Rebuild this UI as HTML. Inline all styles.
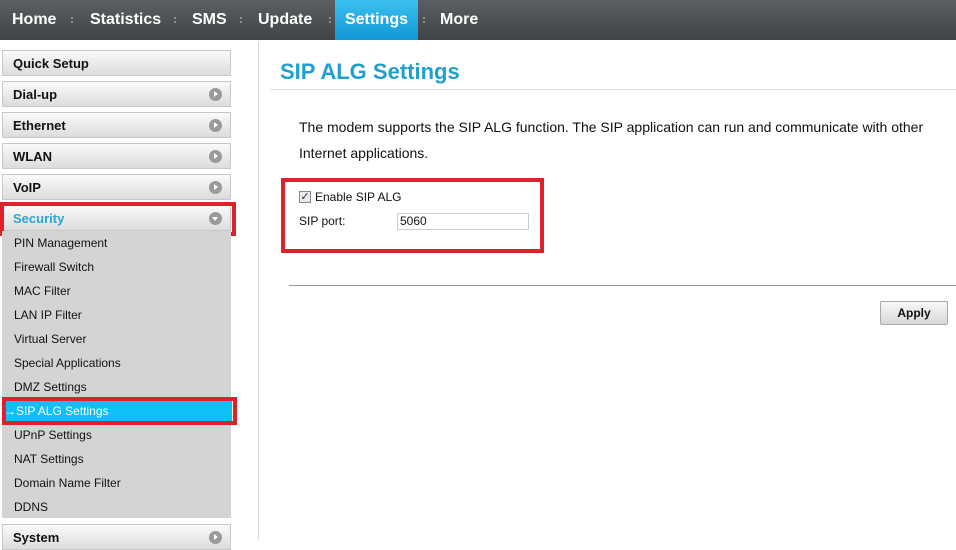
<!DOCTYPE html>
<html><head><style>
*{margin:0;padding:0;box-sizing:border-box}
body{width:956px;height:550px;overflow:hidden;background:#fff;font-family:"Liberation Sans",Arial,sans-serif;position:relative}
.nav{position:absolute;left:0;top:0;width:956px;height:40px;background:linear-gradient(#5a6062,#3f4547)}
.nav span{position:absolute;top:0;height:40px;line-height:40px;color:#fff;font-weight:bold;font-size:16px}
.nav i{position:absolute;top:17px;width:2px;height:6px;border-top:2px dotted #8a9092;border-bottom:2px dotted #8a9092}
.sel{background:linear-gradient(#3cc0ee,#1199d6);}
.m{position:absolute;left:2px;width:229px;height:26px;border:1px solid #c8c8c8;background:linear-gradient(#fafafa,#dcdcdc);font-weight:bold;font-size:13px;line-height:25px;padding-left:10px;color:#111}
.m b{position:absolute;right:8px;top:6px;width:13px;height:13px;border-radius:50%;background:#9a9a9a}
.m b:after{content:"";position:absolute;left:5px;top:3px;border-left:4px solid #fff;border-top:3.5px solid transparent;border-bottom:3.5px solid transparent}
.m b.d:after{left:3px;top:5px;border-top:4px solid #fff;border-left:3.5px solid transparent;border-right:3.5px solid transparent;border-bottom:0}
.sub{position:absolute;left:2px;top:231px;width:229px;height:287px;background:#d4d4d4}
.s{position:absolute;left:14px;font-size:12px;color:#111}
.red{position:absolute;border:4px solid #e0202a}
</style></head><body>
<div class="nav">
<span style="left:12px">Home</span><i style="left:71px"></i>
<span style="left:90px">Statistics</span><i style="left:174px"></i>
<span style="left:192px">SMS</span><i style="left:240px"></i>
<span style="left:258px">Update</span><i style="left:329px"></i>
<span class="sel" style="left:335px;width:83px;text-align:center">Settings</span><i style="left:423px"></i>
<span style="left:440px">More</span>
</div>
<div class="m" style="top:50px">Quick Setup</div>
<div class="m" style="top:81px">Dial-up<b></b></div>
<div class="m" style="top:112px">Ethernet<b></b></div>
<div class="m" style="top:143px">WLAN<b></b></div>
<div class="m" style="top:174px">VoIP<b></b></div>
<div class="m" style="top:205px;color:#2aa6d3">Security<b class="d"></b></div>
<div class="red" style="left:0;top:202px;width:236px;height:34px"></div>
<div class="sub"></div>
<div class="s" style="top:236px">PIN Management</div>
<div class="s" style="top:260px">Firewall Switch</div>
<div class="s" style="top:284px">MAC Filter</div>
<div class="s" style="top:308px">LAN IP Filter</div>
<div class="s" style="top:332px">Virtual Server</div>
<div class="s" style="top:356px">Special Applications</div>
<div class="s" style="top:380px">DMZ Settings</div>
<div style="position:absolute;left:4px;top:401px;width:228px;height:20px;background:#0fc0f8"></div>
<div class="s" style="top:404px;left:4px;color:#fff">→SIP ALG Settings</div>
<div class="red" style="left:2px;top:397px;width:235px;height:28px"></div>
<div class="s" style="top:428px">UPnP Settings</div>
<div class="s" style="top:452px">NAT Settings</div>
<div class="s" style="top:476px">Domain Name Filter</div>
<div class="s" style="top:500px">DDNS</div>
<div class="m" style="top:524px">System<b></b></div>
<div style="position:absolute;left:258px;top:42px;width:1px;height:498px;background:#d8d8d8"></div>
<div style="position:absolute;left:280px;top:59px;font-size:22px;font-weight:bold;color:#1fa0d0">SIP ALG Settings</div>
<div style="position:absolute;left:270px;top:89px;width:686px;height:1px;background:#ddd"></div>
<div style="position:absolute;left:299px;top:114px;width:650px;font-size:14px;line-height:26px;color:#111">The modem supports the SIP ALG function. The SIP application can run and communicate with other Internet applications.</div>
<div class="red" style="left:281px;top:178px;width:263px;height:75px"></div>
<div style="position:absolute;left:299px;top:191px;width:12px;height:12px;border:1px solid #888;background:#e8e8f0;font-size:11px;line-height:10px;text-align:center;color:#333">✓</div>
<div style="position:absolute;left:315px;top:190px;font-size:12px;color:#111">Enable SIP ALG</div>
<div style="position:absolute;left:299px;top:214px;font-size:12px;color:#111">SIP port:</div>
<div style="position:absolute;left:397px;top:213px;width:132px;height:17px;border:1px solid #ccc;font-size:12px;line-height:15px;padding-left:2px;color:#111">5060</div>
<div style="position:absolute;left:289px;top:285px;width:667px;height:1px;background:#999"></div>
<div style="position:absolute;left:880px;top:301px;width:68px;height:24px;border:1px solid #aaa;border-radius:2px;background:linear-gradient(#f8f8f8,#d8d8d8);font-size:12px;font-weight:bold;text-align:center;line-height:22px;color:#111">Apply</div>
</body></html>
